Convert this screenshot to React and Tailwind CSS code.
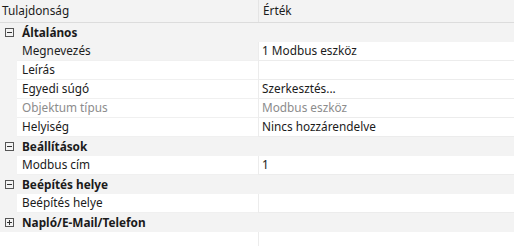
import { Fragment } from 'react'

const groups = [
  {
    title: 'Általános',
    open: true,
    items: [
      { name: 'Megnevezés', value: '1 Modbus eszköz', selected: true },
      { name: 'Leírás', value: '' },
      { name: 'Egyedi súgó', value: 'Szerkesztés...' },
      { name: 'Objektum típus', value: 'Modbus eszköz', disabled: true },
      { name: 'Helyiség', value: 'Nincs hozzárendelve' },
    ],
  },
  { title: 'Beállítások', open: true, items: [{ name: 'Modbus cím', value: '1' }] },
  { title: 'Beépítés helye', open: true, items: [{ name: 'Beépítés helye', value: '' }] },
  { title: 'Napló/E-Mail/Telefon', open: false, items: [] },
]

function Toggle({ open }) {
  return (
    <svg width="9" height="9" viewBox="0 0 9 9" className="shrink-0">
      <rect x="0.5" y="0.5" width="8" height="8" fill="none" stroke="#555" />
      <line x1="2" y1="4.5" x2="7" y2="4.5" stroke="#333" />
      {!open && <line x1="4.5" y1="2" x2="4.5" y2="7" stroke="#333" />}
    </svg>
  )
}

export default function App() {
  return (
    <div className="w-[514px] h-[246px] bg-white text-[11.8px] text-[#1b1b1b] overflow-hidden" style={{ fontFamily: '"Noto Sans", "Open Sans", sans-serif' }}>
      <div className="grid grid-cols-[258px_1fr] h-[23px] bg-[#f3f3f3] border-b border-[#dcdcdc]">
        <div className="pl-[2px] flex items-center">Tulajdonság</div>
        <div className="pl-[4px] flex items-center border-l border-[#e4e4e4]">Érték</div>
      </div>
      {groups.map((g) => (
        <Fragment key={g.title}>
          <div className="h-[19px] bg-[#f3f3f3] flex items-center">
            <div className="w-[22px] pl-[5px] flex items-center">
              <Toggle open={g.open} />
            </div>
            <span className="font-bold">{g.title}</span>
          </div>
          {g.items.map((it) => (
            <div key={it.name} className="grid grid-cols-[17px_241px_1fr] h-[19px]">
              <div className="bg-[#f3f3f3]" />
              <div className={`flex items-center pl-[5px] border-b border-[#f0f0f0] ${it.selected ? 'bg-[#f3f3f3]' : 'bg-white'} ${it.disabled ? 'text-[#8c8c8c]' : ''}`}>
                {it.name}
              </div>
              <div className={`flex items-center pl-[3px] border-l border-b border-[#ececec] ${it.disabled ? 'text-[#8c8c8c]' : ''}`}>
                {it.value}
              </div>
            </div>
          ))}
        </Fragment>
      ))}
      <div className="grid grid-cols-[258px_1fr] h-[14px]">
        <div />
        <div className="border-l border-[#ececec]" />
      </div>
    </div>
  )
}
